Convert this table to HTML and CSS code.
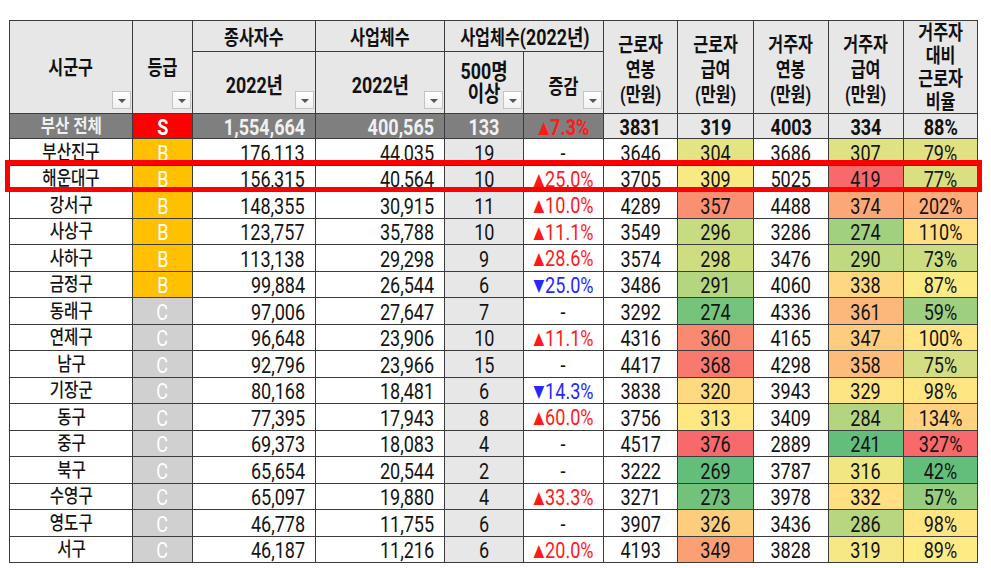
FILE: index.html
```html
<!DOCTYPE html>
<html lang="ko">
<head>
<meta charset="utf-8">
<title>부산 구군별 종사자 현황</title>
<link rel="stylesheet" href="styles.css">
</head>
<body>
<div class="wrap">
<table class="tbl">
<colgroup>
<col style="width:123px"><col style="width:60px"><col style="width:123px"><col style="width:129px"><col style="width:79px"><col style="width:80px"><col style="width:74px"><col style="width:76px"><col style="width:75px"><col style="width:75px"><col style="width:74px">
</colgroup>
<thead>
<tr class="hr1">
<th rowspan="2" class="hf"><span class="s dn1">시군구</span><span class="flt"></span></th>
<th rowspan="2" class="hf"><span class="s dn1">등급</span><span class="flt"></span></th>
<th><span class="s dn2">종사자수</span></th>
<th><span class="s dn2">사업체수</span></th>
<th colspan="2"><span class="s dn2">사업체수<span class="d">(2022년)</span></span></th>
<th rowspan="2" class="ml"><span class="s">근로자<br>연봉<br>(만원)</span></th>
<th rowspan="2" class="ml"><span class="s">근로자<br>급여<br>(만원)</span></th>
<th rowspan="2" class="ml"><span class="s">거주자<br>연봉<br>(만원)</span></th>
<th rowspan="2" class="ml"><span class="s">거주자<br>급여<br>(만원)</span></th>
<th rowspan="2" class="ml4"><span class="s">거주자<br>대비<br>근로자<br>비율</span></th>
</tr>
<tr class="hr2">
<th class="hf"><span class="s d dn3">2022년</span><span class="flt"></span></th>
<th class="hf"><span class="s d dn3">2022년</span><span class="flt"></span></th>
<th class="hf two"><span class="s d">500명<br>이상</span><span class="flt"></span></th>
<th class="hf"><span class="s dn4">증감</span><span class="flt"></span></th>
</tr>
</thead>
<tbody>
<tr class="tot">
<td class="nm dk"><span>부산 전체</span></td>
<td class="gr gs"><span>S</span></td>
<td class="rt dk"><span>1,554,664</span></td>
<td class="rt dk"><span>400,565</span></td>
<td class="ct dk"><span>133</span></td>
<td class="ct dk up"><span><i class="tri">▲</i>7.3%</span></td>
<td class="ct lt"><span>3831</span></td>
<td class="ct lt"><span>319</span></td>
<td class="ct lt"><span>4003</span></td>
<td class="ct lt"><span>334</span></td>
<td class="ct lt"><span>88%</span></td>
</tr>
<tr><td class="nm"><span>부산진구</span></td><td class="gr gb"><span>B</span></td><td class="rt"><span>176,113</span></td><td class="rt"><span>44,035</span></td><td class="ct g5"><span>19</span></td><td class="ct"><span>-</span></td><td class="ct"><span>3646</span></td><td class="ct" style="background:#e5e483"><span>304</span></td><td class="ct"><span>3686</span></td><td class="ct" style="background:#dfe282"><span>307</span></td><td class="ct" style="background:#e0e282"><span>79%</span></td></tr>
<tr><td class="nm"><span>해운대구</span></td><td class="gr gb"><span>B</span></td><td class="rt"><span>156,315</span></td><td class="rt"><span>40,564</span></td><td class="ct g5"><span>10</span></td><td class="ct up"><span><i class="tri">▲</i>25.0%</span></td><td class="ct"><span>3705</span></td><td class="ct" style="background:#f8e984"><span>309</span></td><td class="ct"><span>5025</span></td><td class="ct" style="background:#f8696b"><span>419</span></td><td class="ct" style="background:#dae082"><span>77%</span></td></tr>
<tr><td class="nm"><span>강서구</span></td><td class="gr gb"><span>B</span></td><td class="rt"><span>148,355</span></td><td class="rt"><span>30,915</span></td><td class="ct g5"><span>11</span></td><td class="ct up"><span><i class="tri">▲</i>10.0%</span></td><td class="ct"><span>4289</span></td><td class="ct" style="background:#fa8f72"><span>357</span></td><td class="ct"><span>4488</span></td><td class="ct" style="background:#fba777"><span>374</span></td><td class="ct" style="background:#fcad78"><span>202%</span></td></tr>
<tr><td class="nm"><span>사상구</span></td><td class="gr gb"><span>B</span></td><td class="rt"><span>123,757</span></td><td class="rt"><span>35,788</span></td><td class="ct g5"><span>10</span></td><td class="ct up"><span><i class="tri">▲</i>11.1%</span></td><td class="ct"><span>3549</span></td><td class="ct" style="background:#c7db81"><span>296</span></td><td class="ct"><span>3286</span></td><td class="ct" style="background:#a1d07f"><span>274</span></td><td class="ct" style="background:#fedf82"><span>110%</span></td></tr>
<tr><td class="nm"><span>사하구</span></td><td class="gr gb"><span>B</span></td><td class="rt"><span>113,138</span></td><td class="rt"><span>29,298</span></td><td class="ct g5"><span>9</span></td><td class="ct up"><span><i class="tri">▲</i>28.6%</span></td><td class="ct"><span>3574</span></td><td class="ct" style="background:#cfdd81"><span>298</span></td><td class="ct"><span>3476</span></td><td class="ct" style="background:#bfd980"><span>290</span></td><td class="ct" style="background:#ccdc81"><span>73%</span></td></tr>
<tr><td class="nm"><span>금정구</span></td><td class="gr gb"><span>B</span></td><td class="rt"><span>99,884</span></td><td class="rt"><span>26,544</span></td><td class="ct g5"><span>6</span></td><td class="ct dn"><span><i class="tri">▼</i>25.0%</span></td><td class="ct"><span>3486</span></td><td class="ct" style="background:#b5d680"><span>291</span></td><td class="ct"><span>4060</span></td><td class="ct" style="background:#fed880"><span>338</span></td><td class="ct" style="background:#fcea84"><span>87%</span></td></tr>
<tr><td class="nm"><span>동래구</span></td><td class="gr gc"><span>C</span></td><td class="rt"><span>97,006</span></td><td class="rt"><span>27,647</span></td><td class="ct g5"><span>7</span></td><td class="ct"><span>-</span></td><td class="ct"><span>3292</span></td><td class="ct" style="background:#76c37c"><span>274</span></td><td class="ct"><span>4336</span></td><td class="ct" style="background:#fcb87a"><span>361</span></td><td class="ct" style="background:#9dcf7e"><span>59%</span></td></tr>
<tr><td class="nm"><span>연제구</span></td><td class="gr gc"><span>C</span></td><td class="rt"><span>96,648</span></td><td class="rt"><span>23,906</span></td><td class="ct g5"><span>10</span></td><td class="ct up"><span><i class="tri">▲</i>11.1%</span></td><td class="ct"><span>4316</span></td><td class="ct" style="background:#fa8971"><span>360</span></td><td class="ct"><span>4165</span></td><td class="ct" style="background:#fdcc7e"><span>347</span></td><td class="ct" style="background:#ffe583"><span>100%</span></td></tr>
<tr><td class="nm"><span>남구</span></td><td class="gr gc"><span>C</span></td><td class="rt"><span>92,796</span></td><td class="rt"><span>23,966</span></td><td class="ct g5"><span>15</span></td><td class="ct"><span>-</span></td><td class="ct"><span>4417</span></td><td class="ct" style="background:#f9796e"><span>368</span></td><td class="ct"><span>4298</span></td><td class="ct" style="background:#fdbc7b"><span>358</span></td><td class="ct" style="background:#d3de82"><span>75%</span></td></tr>
<tr><td class="nm"><span>기장군</span></td><td class="gr gc"><span>C</span></td><td class="rt"><span>80,168</span></td><td class="rt"><span>18,481</span></td><td class="ct g5"><span>6</span></td><td class="ct dn"><span><i class="tri">▼</i>14.3%</span></td><td class="ct"><span>3838</span></td><td class="ct" style="background:#fed980"><span>320</span></td><td class="ct"><span>3943</span></td><td class="ct" style="background:#ffe483"><span>329</span></td><td class="ct" style="background:#ffe683"><span>98%</span></td></tr>
<tr><td class="nm"><span>동구</span></td><td class="gr gc"><span>C</span></td><td class="rt"><span>77,395</span></td><td class="rt"><span>17,943</span></td><td class="ct g5"><span>8</span></td><td class="ct up"><span><i class="tri">▲</i>60.0%</span></td><td class="ct"><span>3756</span></td><td class="ct" style="background:#ffe783"><span>313</span></td><td class="ct"><span>3409</span></td><td class="ct" style="background:#b4d580"><span>284</span></td><td class="ct" style="background:#fed27f"><span>134%</span></td></tr>
<tr><td class="nm"><span>중구</span></td><td class="gr gc"><span>C</span></td><td class="rt"><span>69,373</span></td><td class="rt"><span>18,083</span></td><td class="ct g5"><span>4</span></td><td class="ct"><span>-</span></td><td class="ct"><span>4517</span></td><td class="ct" style="background:#f8696b"><span>376</span></td><td class="ct"><span>2889</span></td><td class="ct" style="background:#63be7b"><span>241</span></td><td class="ct" style="background:#f8696b"><span>327%</span></td></tr>
<tr><td class="nm"><span>북구</span></td><td class="gr gc"><span>C</span></td><td class="rt"><span>65,654</span></td><td class="rt"><span>20,544</span></td><td class="ct g5"><span>2</span></td><td class="ct"><span>-</span></td><td class="ct"><span>3222</span></td><td class="ct" style="background:#63be7b"><span>269</span></td><td class="ct"><span>3787</span></td><td class="ct" style="background:#f0e783"><span>316</span></td><td class="ct" style="background:#63be7b"><span>42%</span></td></tr>
<tr><td class="nm"><span>수영구</span></td><td class="gr gc"><span>C</span></td><td class="rt"><span>65,097</span></td><td class="rt"><span>19,880</span></td><td class="ct g5"><span>4</span></td><td class="ct up"><span><i class="tri">▲</i>33.3%</span></td><td class="ct"><span>3271</span></td><td class="ct" style="background:#72c27c"><span>273</span></td><td class="ct"><span>3978</span></td><td class="ct" style="background:#fee082"><span>332</span></td><td class="ct" style="background:#96cd7e"><span>57%</span></td></tr>
<tr><td class="nm"><span>영도구</span></td><td class="gr gc"><span>C</span></td><td class="rt"><span>46,778</span></td><td class="rt"><span>11,755</span></td><td class="ct g5"><span>6</span></td><td class="ct"><span>-</span></td><td class="ct"><span>3907</span></td><td class="ct" style="background:#fdcd7e"><span>326</span></td><td class="ct"><span>3436</span></td><td class="ct" style="background:#b8d680"><span>286</span></td><td class="ct" style="background:#ffe683"><span>98%</span></td></tr>
<tr><td class="nm"><span>서구</span></td><td class="gr gc"><span>C</span></td><td class="rt"><span>46,187</span></td><td class="rt"><span>11,216</span></td><td class="ct g5"><span>6</span></td><td class="ct up"><span><i class="tri">▲</i>20.0%</span></td><td class="ct"><span>4193</span></td><td class="ct" style="background:#fb9f75"><span>349</span></td><td class="ct"><span>3828</span></td><td class="ct" style="background:#f6e884"><span>319</span></td><td class="ct" style="background:#ffeb84"><span>89%</span></td></tr>
</tbody>
</table>
<div class="hl"></div>
</div>
</body>
</html>
```
FILE: styles.css
```css
html, body {
  margin: 0;
  padding: 0;
  background: #ffffff;
}
body {
  font-family: Roboto, "Noto Sans CJK KR", sans-serif;
  color: #141414;
}
.wrap {
  position: relative;
  margin: 20px 0 0 9px;
  width: 968px;
}
.tbl {
  border-collapse: collapse;
  table-layout: fixed;
  width: 968px;
}
.tbl th, .tbl td {
  border: 1px solid #3c3c3c;
  padding: 0;
  overflow: hidden;
  white-space: nowrap;
}
.tbl th {
  position: relative;
  background: #e7e7e7;
  font-family: Roboto, "Noto Sans CJK KR", sans-serif;
  font-weight: 700;
  font-size: 20px;
  line-height: 24px;
  color: #111;
  text-align: center;
  vertical-align: middle;
}
.tbl th .s {
  display: inline-block;
  transform: scaleX(0.81);
  transform-origin: center;
  position: relative;
}
.tbl th .d {
  font-size: 22px;
}
.tbl th .dn1 { top: 1px; }
.tbl th .dn2 { top: 2px; }
.tbl th .dn3 { top: 3px; }
.tbl th .dn4 { top: 4px; }
.tbl th.two {
  line-height: 22px;
}
.tbl th.ml {
  line-height: 25px;
}
.tbl th.ml .s {
  top: 3px;
}
.tbl th.ml4 {
  line-height: 23px;
}
.tbl th.ml4 .s {
  vertical-align: top;
  top: 1px;
}
.hr1 { height: 31px; }
.hr2 { height: 61px; }
.tot { height: 25px; }
tbody tr { height: 26.5px; }
.tbl td {
  font-size: 22px;
  line-height: 22px;
  vertical-align: middle;
}
.tbl td > span {
  display: inline-block;
  transform: scaleX(0.82);
  transform-origin: center;
  line-height: 22px;
  position: relative;
  top: 2px;
}
.tbl td.nm {
  font-size: 19px;
  font-weight: 500;
  text-align: center;
}
.tbl td.nm > span {
  top: 1px;
}
.rt {
  text-align: right;
  padding-right: 10px !important;
}
.tbl td.rt > span {
  transform-origin: right center;
}
.ct { text-align: center; }
.gr {
  text-align: center;
  color: #ffffff;
}
.gs { background: #ff0000; font-weight: 700; }
.gb { background: #ffc000; }
.gc { background: #d0d0d0; }
.g5 { background: #e7e7e7; }
.tot td { font-weight: 700; }
.tot td.nm { font-weight: 700; }
.tot .dk {
  background: #7f7f7f;
  color: #f0f0f0;
}
.tot .lt {
  background: #e7e7e7;
  color: #111;
}
.tbl td.up { color: #ff1a1a; }
.tbl td.dn { color: #2626ff; }
.tri {
  font-style: normal;
  font-family: "DejaVu Sans", sans-serif;
  font-size: 17px;
  position: relative;
  top: -2px;
  margin-right: 1px;
}
.flt {
  position: absolute;
  right: 1px;
  bottom: 4px;
  width: 19px;
  height: 18px;
  box-sizing: border-box;
  background: linear-gradient(#ffffff, #f0f0f0);
  border: 1px solid #c4c4c4;
}
.flt::after {
  content: "";
  position: absolute;
  left: 5px;
  top: 7px;
  border-left: 4px solid transparent;
  border-right: 4px solid transparent;
  border-top: 4px solid #555;
}
.hl {
  position: absolute;
  left: -4px;
  top: 140px;
  width: 977px;
  height: 32px;
  box-sizing: border-box;
  border: 5px solid #ff0000;
  pointer-events: none;
}
```
